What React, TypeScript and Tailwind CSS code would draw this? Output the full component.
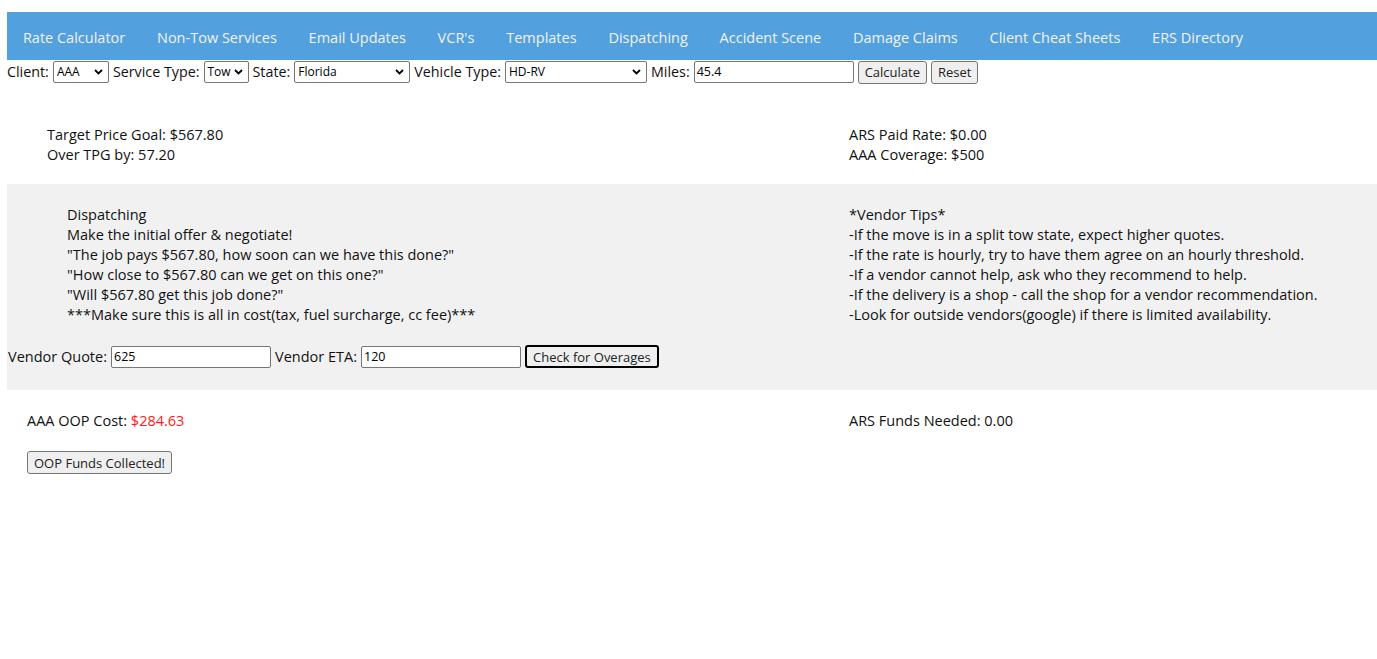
import React from "react";

const Chevron = () => (
  <svg width="9" height="6" viewBox="0 0 9 6" className="absolute right-[5px] top-1/2 -translate-y-1/2">
    <path d="M1 1 L4.5 4.5 L8 1" fill="none" stroke="#000" strokeWidth="1.8" />
  </svg>
);

function Select({ value, w }: { value: string; w: string }) {
  return (
    <div className={`relative h-[22px] ${w} border border-[#767676] rounded-[2px] bg-white text-[12px] leading-[20px] pl-[3px] text-black`}>
      {value}
      <Chevron />
    </div>
  );
}

function Input({ value, w }: { value: string; w: string }) {
  return (
    <div className={`h-[22px] ${w} border border-[#767676] rounded-[2px] bg-white text-[12.5px] leading-[20px] pl-[2px] text-black`}>
      {value}
    </div>
  );
}

function Btn({ label, focus }: { label: string; focus?: boolean }) {
  return (
    <div
      className={`h-[23px] px-[6px] bg-[#efefef] rounded-[3px] text-[13px] leading-[20px] text-[#222] flex items-center ${
        focus ? "border-2 border-black px-[5px]" : "border border-[#767676]"
      }`}
    >
      {label}
    </div>
  );
}

export default function App() {
  const nav = [
    "Rate Calculator",
    "Non-Tow Services",
    "Email Updates",
    "VCR's",
    "Templates",
    "Dispatching",
    "Accident Scene",
    "Damage Claims",
    "Client Cheat Sheets",
    "ERS Directory",
  ];
  return (
    <div className="font-['Open_Sans',sans-serif] text-[14.5px] leading-[20px] text-[#111] pt-[12px] pl-[7px] w-[1377px] bg-white min-h-[659px]">
      <div className="h-[48px] bg-[#52a0de] flex items-center pt-[3px]">
        {nav.map((n) => (
          <div key={n} className="px-[15.9px] text-[#f2f2f2]">
            {n}
          </div>
        ))}
      </div>
      <div className="flex items-center gap-[4px] h-[24px] whitespace-nowrap text-[14.3px]">
        <span>Client:</span>
        <Select value="AAA" w="w-[56px]" />
        <span>Service Type:</span>
        <Select value="Tow" w="w-[45px]" />
        <span>State:</span>
        <Select value="Florida" w="w-[116px]" />
        <span>Vehicle Type:</span>
        <Select value="HD-RV" w="w-[142px]" />
        <span>Miles:</span>
        <Input value="45.4" w="w-[160px]" />
        <Btn label="Calculate" />
        <Btn label="Reset" />
      </div>
      <div className="flex pt-[41px] pb-[19px]">
        <div className="w-[842px] pl-[40px]">
          <div>Target Price Goal: $567.80</div>
          <div>Over TPG by: 57.20</div>
        </div>
        <div>
          <div>ARS Paid Rate: $0.00</div>
          <div>AAA Coverage: $500</div>
        </div>
      </div>
      <div className="bg-[#f1f1f1] pt-[21px] pb-[22px]">
        <div className="flex">
          <div className="w-[842px] pl-[60px]">
            <div>Dispatching</div>
            <div>Make the initial offer &amp; negotiate!</div>
            <div>"The job pays $567.80, how soon can we have this done?"</div>
            <div>"How close to $567.80 can we get on this one?"</div>
            <div>"Will $567.80 get this job done?"</div>
            <div>***Make sure this is all in cost(tax, fuel surcharge, cc fee)***</div>
          </div>
          <div>
            <div>*Vendor Tips*</div>
            <div>-If the move is in a split tow state, expect higher quotes.</div>
            <div>-If the rate is hourly, try to have them agree on an hourly threshold.</div>
            <div>-If a vendor cannot help, ask who they recommend to help.</div>
            <div>-If the delivery is a shop - call the shop for a vendor recommendation.</div>
            <div>-Look for outside vendors(google) if there is limited availability.</div>
          </div>
        </div>
        <div className="flex items-center gap-[4px] mt-[20px] pl-[1px] whitespace-nowrap">
          <span>Vendor Quote:</span>
          <Input value="625" w="w-[160px]" />
          <span>Vendor ETA:</span>
          <Input value="120" w="w-[160px]" />
          <Btn label="Check for Overages" focus />
        </div>
      </div>
      <div className="flex pt-[21px]">
        <div className="w-[842px] pl-[20px]">
          <div>
            AAA OOP Cost: <span className="text-[#ff1a1a]">$284.63</span>
          </div>
          <div className="mt-[20px] flex">
            <Btn label="OOP Funds Collected!" />
          </div>
        </div>
        <div>ARS Funds Needed: 0.00</div>
      </div>
    </div>
  );
}
